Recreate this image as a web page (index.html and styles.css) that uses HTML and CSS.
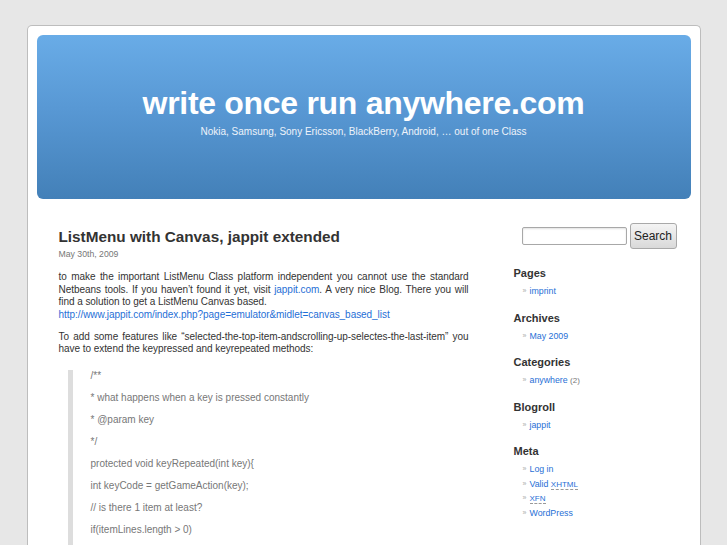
FILE: index.html
```html
<!DOCTYPE html>
<html lang="en">
<head>
<meta charset="UTF-8">
<title>write once run anywhere.com</title>
<link rel="stylesheet" href="styles.css">
</head>
<body>

<div id="page">

  <div class="header">
    <h1><a href="#">write once run anywhere.com</a></h1>
    <div class="description">Nokia, Samsung, Sony Ericsson, BlackBerry, Android, &hellip; out of one Class</div>
  </div>

  <div class="wrap">

    <!-- content -->
    <div class="content">
      <div class="post">
        <h2><a href="#">ListMenu with Canvas, jappit extended</a></h2>
        <small>May 30th, 2009</small>

        <div class="entry">
          <p>to make the important ListMenu Class platform independent you cannot use the standard Netbeans tools. If you haven&rsquo;t found it yet, visit <a href="#">jappit.com</a>. A very nice Blog. There you will find a solution to get a ListMenu Canvas based.<br>
          <a href="#">http://www.jappit.com/index.php?page=emulator&amp;midlet=canvas_based_list</a></p>

          <p>To add some features like &ldquo;selected-the-top-item-andscrolling-up-selectes-the-last-item&rdquo; you have to extend the keypressed and keyrepeated methods:</p>

          <blockquote>
            <p>/**</p>
            <p>* what happens when a key is pressed constantly</p>
            <p>* @param key</p>
            <p>*/</p>
            <p>protected void keyRepeated(int key){</p>
            <p>int keyCode = getGameAction(key);</p>
            <p>// is there 1 item at least?</p>
            <p>if(itemLines.length &gt; 0)</p>
            <p>{</p>
            <p>// going up</p>
          </blockquote>
        </div>
      </div>
    </div>

    <!-- sidebar -->
    <div class="sidebar">
      <form class="searchform">
        <input type="text" class="search-input">
        <button type="button" class="search-btn">Search</button>
      </form>

      <div class="widget">
        <h2>Pages</h2>
        <ul>
          <li><a href="#">imprint</a></li>
        </ul>
      </div>

      <div class="widget">
        <h2>Archives</h2>
        <ul>
          <li><a href="#">May 2009</a></li>
        </ul>
      </div>

      <div class="widget">
        <h2>Categories</h2>
        <ul>
          <li><a href="#">anywhere</a> <span class="count">(2)</span></li>
        </ul>
      </div>

      <div class="widget">
        <h2>Blogroll</h2>
        <ul>
          <li><a href="#">jappit</a></li>
        </ul>
      </div>

      <div class="widget">
        <h2>Meta</h2>
        <ul>
          <li><a href="#">Log in</a></li>
          <li><a href="#">Valid <abbr title="eXtensible HyperText Markup Language">XHTML</abbr></a></li>
          <li><a href="#"><abbr title="XHTML Friends Network">XFN</abbr></a></li>
          <li><a href="#">WordPress</a></li>
        </ul>
      </div>
    </div>

  </div>
</div>

</body>
</html>
```

FILE: styles.css
```css
body {
  margin: 0;
  padding: 25px 0 0;
  background: #e7e7e7;
  font-family: 'Liberation Sans', Arial, sans-serif;
  color: #333;
}

a {
  color: #1f6fd6;
  text-decoration: none;
}

#page {
  width: 654px;
  margin: 0 auto;
  padding: 9px 9px 0;
  background: #fff;
  border: 1px solid #bdbdbd;
  border-bottom: none;
  border-radius: 5px 5px 0 0;
  min-height: 600px;
}

/* header */
.header {
  height: 164px;
  border-radius: 6px;
  background: linear-gradient(180deg, #69ace7 0%, #5898d4 45%, #4380b8 100%);
  text-align: center;
  overflow: hidden;
}

.header h1 {
  margin: 0;
  padding-top: 50px;
  font-size: 32px;
  line-height: 36px;
  font-weight: bold;
  letter-spacing: -0.3px;
}

.header h1 a {
  color: #fff;
}

.header .description {
  margin-top: 5px;
  font-size: 10px;
  color: #eef3fa;
}

.wrap {
  display: flex;
  align-items: flex-start;
}

/* content */
.content {
  width: 410px;
  margin-left: 22px;
  padding-top: 28px;
}

.post h2 {
  margin: 0 0 2px;
  font-size: 15.3px;
  line-height: 20px;
}

.post h2 a {
  color: #333;
}

.post small {
  display: block;
  font-size: 8.7px;
  line-height: 10px;
  color: #777;
}

.entry {
  margin-top: 12px;
  font-size: 10px;
  line-height: 12.6px;
  letter-spacing: -0.05px;
}

.entry p {
  margin: 0 0 9.2px;
  text-align: justify;
}

.entry blockquote {
  margin: 14px 0 0 9px;
  padding-left: 18px;
  border-left: 5px solid #ddd;
  color: #777;
  letter-spacing: 0;
}

.entry blockquote p {
  margin: 0 0 9.4px;
  text-align: left;
}

/* sidebar */
.sidebar {
  width: 170px;
  margin-left: 45px;
  padding-top: 24px;
}

.searchform {
  display: flex;
  align-items: center;
  gap: 3px;
  padding-left: 8px;
  margin: 0;
}

.search-input {
  width: 101px;
  height: 14px;
  padding: 1px;
  border: 1px solid #a8a8a8;
  border-radius: 2px;
  box-shadow: inset 0 1px 2px rgba(0,0,0,0.12);
}

.search-btn {
  width: 47px;
  height: 26px;
  padding: 0;
  font-family: 'Liberation Sans', Arial, sans-serif;
  font-size: 12px;
  color: #222;
  border: 1px solid #a9a9a9;
  border-radius: 3px;
  background: linear-gradient(180deg, #f4f4f4, #d9d9d9);
}

.widget {
  margin-top: 17px;
}

.widget + .widget {
  margin-top: 12px;
}

.widget h2 {
  margin: 0 0 4px;
  font-size: 11px;
  line-height: 14px;
}

.widget ul {
  margin: 0;
  padding: 0 0 0 16px;
  list-style: none;
}

.widget li {
  position: relative;
  font-size: 8.8px;
  line-height: 14.5px;
}

.widget li::before {
  content: "\00BB";
  position: absolute;
  left: -7px;
  top: 0;
  color: #aaa;
  font-size: 7px;
}

.widget .count {
  color: #777;
  font-size: 8px;
  line-height: 1;
}

abbr {
  font-size: 8px;
  line-height: 1;
  text-decoration: none;
  border-bottom: 1px dashed #999;
}
```
